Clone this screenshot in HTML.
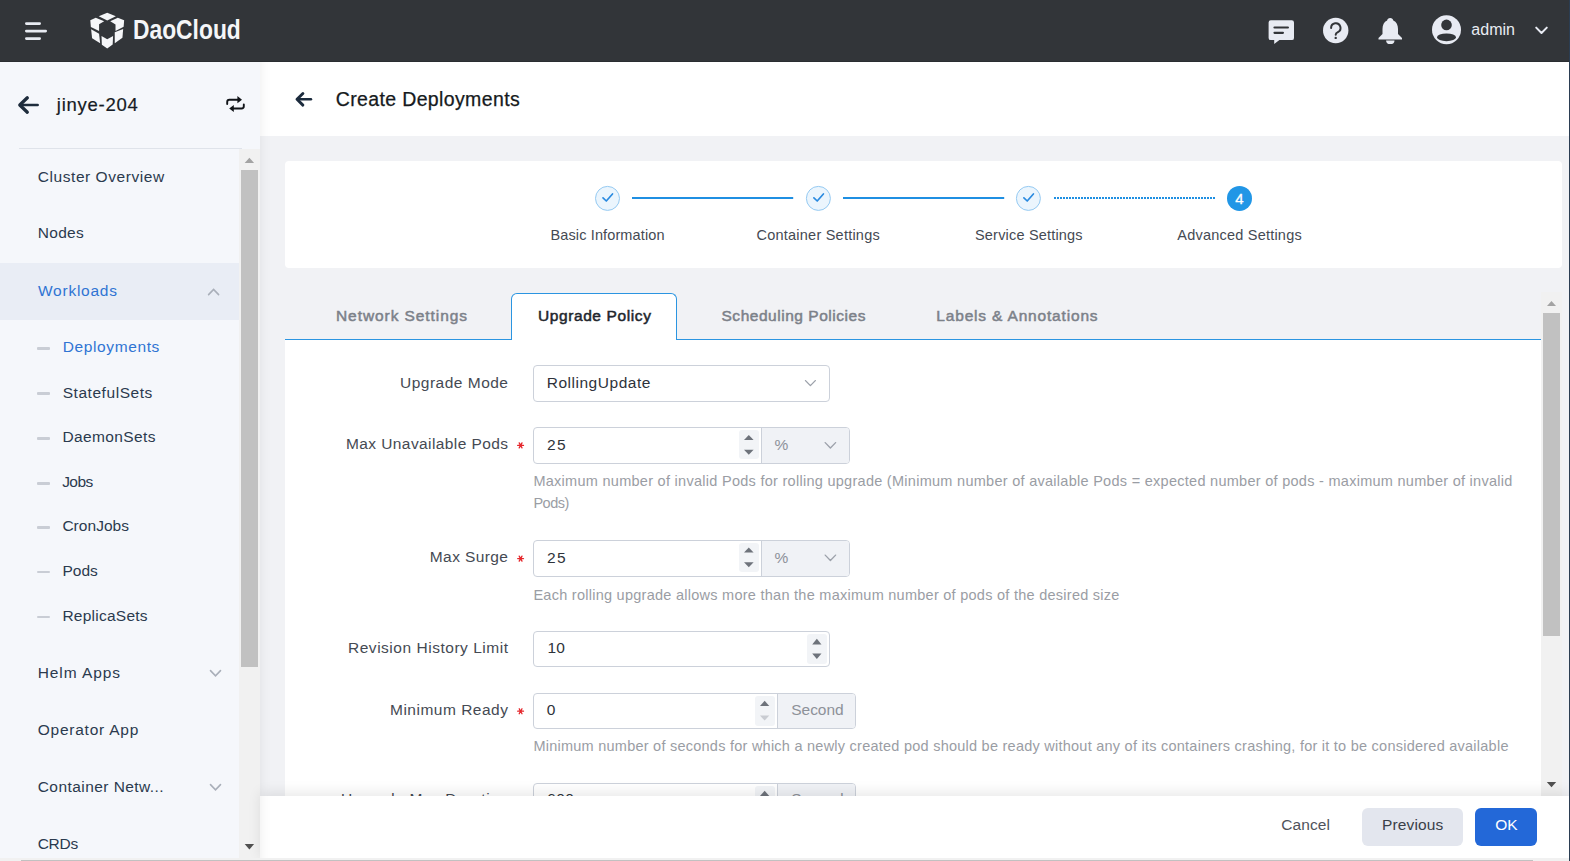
<!DOCTYPE html>
<html><head><meta charset="utf-8">
<style>
*{box-sizing:border-box;margin:0;padding:0}
html,body{width:1570px;height:861px;overflow:hidden;background:#f1f2f5;font-family:"Liberation Sans",sans-serif}
.a{position:absolute}
.t{position:absolute;white-space:nowrap;line-height:normal;z-index:5}
svg{position:absolute;overflow:visible}
.dash{position:absolute;left:37px;width:13px;height:2.5px;background:#c9cdd5;border-radius:1px}
.inp{position:absolute;border:1px solid #ccd1da;border-radius:4px;background:#fff;overflow:hidden}
.add{position:absolute;top:0;bottom:0;right:0;background:#f0f2f6;border-left:1px solid #ccd1da}
.spin{position:absolute;background:#f2f4f7;border-radius:3px}

</style></head><body>
<!-- main gray -->
<div class="a" style="left:260px;top:62px;width:1310px;height:799px;background:#f1f2f5"></div>
<div class="a" style="left:260px;top:62px;width:1310px;height:74px;background:#fff"></div>
<!-- sidebar -->
<div class="a" style="left:0;top:62px;width:260px;height:799px;background:#f5f7fb;z-index:2"></div>
<div class="a" style="left:260px;top:62px;width:24px;height:799px;overflow:hidden;z-index:11"><div class="a" style="left:-300px;top:-20px;width:300px;height:840px;box-shadow:2px 0 10px rgba(0,0,0,0.06)"></div></div>
<div class="a" style="left:0;top:263px;width:239px;height:57px;background:#e9edf5;z-index:3"></div>
<div class="a" style="left:19px;top:148px;width:223px;height:1px;background:#dfe3ea;z-index:3"></div>
<div class="dash" style="top:347px;z-index:3"></div>
<div class="dash" style="top:392px;z-index:3"></div>
<div class="dash" style="top:437px;z-index:3"></div>
<div class="dash" style="top:482px;z-index:3"></div>
<div class="dash" style="top:526px;z-index:3"></div>
<div class="dash" style="top:570.5px;z-index:3"></div>
<div class="dash" style="top:615.5px;z-index:3"></div>
<svg style="left:0;top:0;z-index:4" width="260" height="861">
  <path d="M37.6 105 H21" stroke="#1e2c3c" stroke-width="2.7" fill="none" stroke-linecap="round"/><path d="M27.3 97.8 L19.8 105 L27.3 112.2" stroke="#1e2c3c" stroke-width="3.3" fill="none" stroke-linecap="round" stroke-linejoin="round"/>
  <path d="M227.2 104 V102 A2.2 2.2 0 0 1 229.4 99.8 H238 M243.8 104.4 V106.3 A2.2 2.2 0 0 1 241.6 108.5 H233" stroke="#111418" stroke-width="1.9" fill="none" stroke-linecap="round"/><path d="M237.4 96 L242 99.7 L237.4 103.2Z M233.8 105 L229.2 108.5 L233.8 112Z" fill="#111418"/>
  <path d="M208.6 294.6 L213.6 289.4 L218.6 294.6" stroke="#a9afb9" stroke-width="1.6" fill="none" stroke-linecap="round"/>
  <path d="M210.5 670.6 L215.5 675.8 L220.5 670.6" stroke="#a9afb9" stroke-width="1.6" fill="none" stroke-linecap="round"/>
  <path d="M210.5 784.6 L215.5 789.8 L220.5 784.6" stroke="#a9afb9" stroke-width="1.6" fill="none" stroke-linecap="round"/>
</svg>
<!-- sidebar scrollbar -->
<div class="a" style="left:239px;top:149px;width:21px;height:712px;background:#f1f1f1;z-index:4"></div>
<div class="a" style="left:241px;top:170px;width:17px;height:497px;background:#c1c1c1;z-index:4"></div>
<svg style="left:0;top:0;z-index:4" width="260" height="861">
  <path d="M244.7 163 L249.4 157.8 L254.1 163Z" fill="#a3a3a3"/>
  <path d="M244.7 844 L254.1 844 L249.4 849.4Z" fill="#505050"/>
</svg>
<!-- header -->
<div class="a" style="left:0;top:0;width:1570px;height:62px;background:#323539;border-bottom:1px solid #2a2d31;z-index:6"></div>
<svg style="left:0;top:0;z-index:7" width="1570" height="62">
  <rect x="25" y="22.3" width="16" height="2.6" rx="1.3" fill="#e8ebf2"/>
  <rect x="25" y="29.8" width="22" height="2.6" rx="1.3" fill="#e8ebf2"/>
  <rect x="25" y="37.3" width="16" height="2.6" rx="1.3" fill="#e8ebf2"/>
  <g transform="translate(86,10) scale(0.04878)" fill="#f5f6f8">
    <path d="M262 130 L435 55 L612 130 L435 215Z"/>
    <path d="M88 212 L200 160 L372 232 L268 292 L268 432 L100 348Z"/>
    <path d="M497 232 L652 160 L782 212 L772 345 L605 432 L605 295Z"/>
    <path d="M105 395 L268 485 L290 682 L125 578Z"/>
    <path d="M318 532 L435 602 L555 532 L547 705 L435 790 L325 712Z"/>
    <path d="M590 458 L762 392 L747 570 L590 680Z"/>
  </g>
  <!-- chat -->
  <path d="M2.2 0 H23.2 A2.2 2.2 0 0 1 25.4 2.2 V17.6 A2.2 2.2 0 0 1 23.2 19.8 H10.8 L5.6 23.8 V19.8 H2.2 A2.2 2.2 0 0 1 0 17.6 V2.2 A2.2 2.2 0 0 1 2.2 0Z" transform="translate(1268.6,20.3)" fill="#e8ebf3"/>
  <rect x="1273.4" y="26.4" width="15.6" height="2.2" rx="1.1" fill="#323539"/>
  <rect x="1273.4" y="31.8" width="10.6" height="2.1" rx="1.05" fill="#323539"/>
  <!-- help -->
  <circle cx="1335.7" cy="30.5" r="12.7" fill="#e8ebf3"/>
  <path d="M1331.1 27.9 A4.7 4.7 0 1 1 1337.9 32.1 C1336.3 32.9 1335.7 33.5 1335.7 34.7" stroke="#323539" stroke-width="2" fill="none" stroke-linecap="round"/>
  <circle cx="1335.7" cy="37.9" r="1.2" fill="#323539"/>
  <!-- bell -->
  <path transform="translate(1378.5,18)" d="M11.7 0 C13.5 0 14.5 1.2 14.8 2.5 C18 3.8 19.5 7 19.5 11 V16 L23.5 20 V21.6 H0 V20 L4 16 V11 C4 7 5.5 3.8 8.6 2.5 C8.9 1.2 9.9 0 11.7 0Z M7.6 22.4 H16 A4.2 3.6 0 0 1 7.6 22.4Z" fill="#e8ebf3"/>
  <!-- avatar -->
  <circle cx="1446.5" cy="29.8" r="14.5" fill="#e8ebf3"/>
  <circle cx="1446.5" cy="24.9" r="5.3" fill="#323539"/>
  <ellipse cx="1446.5" cy="37.3" rx="9.5" ry="3.9" fill="#323539"/>
  <path d="M1536.2 27.6 L1541.5 33 L1546.8 27.6" stroke="#e8ebf3" stroke-width="2" fill="none" stroke-linecap="round" stroke-linejoin="round"/>
</svg>
<div class="t" style="left:132.7px;top:14px;font-size:27.5px;font-weight:700;color:#f5f6f8;transform:scaleX(0.83);transform-origin:0 0;z-index:7">DaoCloud</div>
<div class="a" style="left:1569px;top:0;width:1px;height:861px;background:#2b3d52;z-index:20"></div>
<!-- page header back arrow -->
<svg style="left:0;top:0" width="1570" height="861">
  <path d="M311 99.3 H298.5" stroke="#1c2b3d" stroke-width="2.4" fill="none" stroke-linecap="round"/><path d="M302.9 93.5 L297 99.3 L302.9 105.1" stroke="#1c2b3d" stroke-width="2.9" fill="none" stroke-linecap="round" stroke-linejoin="round"/>
</svg>
<!-- steps card -->
<div class="a" style="left:285px;top:161px;width:1277px;height:107px;background:#fff;border-radius:4px"></div>
<svg style="left:0;top:0;z-index:3" width="1570" height="861">
  <rect x="632" y="197" width="161.2" height="2" fill="#1f8fe2"/>
  <rect x="843" y="197" width="161.2" height="2" fill="#1f8fe2"/>
  <line x1="1054" y1="198" x2="1215" y2="198" stroke="#1f8fe2" stroke-width="2" stroke-dasharray="2 1"/>
  <g fill="#ebf5fd" stroke="#95caf2" stroke-width="1">
    <circle cx="607.5" cy="198.4" r="12"/>
    <circle cx="818.4" cy="198.4" r="12"/>
    <circle cx="1028.4" cy="198.4" r="12"/>
  </g>
  <g stroke="#2a8ae0" stroke-width="1.7" fill="none" stroke-linecap="round" stroke-linejoin="round">
    <path d="M603 197.9 L606.3 201 L612.5 194"/>
    <path d="M813.9 197.9 L817.2 201 L823.4 194"/>
    <path d="M1023.9 197.9 L1027.2 201 L1033.4 194"/>
  </g>
  <circle cx="1239.5" cy="198.4" r="12.5" fill="#2196e6"/>
</svg>
<!-- tabs -->
<div class="a" style="left:285px;top:339px;width:1256px;height:1px;background:#2b95e1"></div>
<div class="a" style="left:511px;top:293px;width:166px;height:47px;background:#fff;border:1px solid #2b95e1;border-bottom:none;border-radius:6px 6px 0 0;z-index:2"></div>
<!-- form area -->
<div class="a" style="left:285px;top:340px;width:1256px;height:456px;background:#fff"></div>
<!-- right scrollbar -->
<div class="a" style="left:1541px;top:292px;width:21px;height:504px;background:#f1f1f1"></div>
<div class="a" style="left:1543px;top:313px;width:17px;height:323px;background:#c1c1c1"></div>
<svg style="left:0;top:0;z-index:3" width="1570" height="861">
  <path d="M1547 306 L1551.5 301 L1556 306Z" fill="#a3a3a3"/>
  <path d="M1546.8 782 L1556.2 782 L1551.5 787.2Z" fill="#505050"/>
</svg>
<!-- inputs -->
<div class="inp" style="left:533px;top:365px;width:297px;height:37px"></div>
<div class="inp" style="left:533px;top:427px;width:317px;height:37px"><div class="add" style="width:88px"></div><div class="spin" style="left:205px;top:2px;width:19.7px;height:29.3px"></div></div>
<div class="inp" style="left:533px;top:539.5px;width:317px;height:37px"><div class="add" style="width:88px"></div><div class="spin" style="left:205px;top:2px;width:19.7px;height:29.3px"></div></div>
<div class="inp" style="left:533px;top:630.5px;width:297px;height:36px"><div class="spin" style="left:273px;top:2.5px;width:19.5px;height:29.5px"></div></div>
<div class="inp" style="left:533px;top:692.5px;width:322.5px;height:36px"><div class="add" style="width:77.5px"></div><div class="spin" style="left:221px;top:2.5px;width:19.6px;height:29.5px"></div></div>
<div class="inp" style="left:533px;top:782.5px;width:322.5px;height:36px"><div class="add" style="width:77.5px"></div><div class="spin" style="left:221px;top:2.5px;width:19.6px;height:29.5px"></div></div>
<svg style="left:0;top:0;z-index:3" width="1570" height="861">
  <g stroke="#9ca1aa" stroke-width="1.35" fill="none" stroke-linecap="round" stroke-linejoin="round">
    <path d="M805.5 380.6 L810.4 385.6 L815.3 380.6"/>
    <path d="M825.2 442.6 L830.4 448 L835.6 442.6"/>
    <path d="M825.2 555.1 L830.4 560.5 L835.6 555.1"/>
  </g>
  <g fill="#6e737b">
    <path d="M744 439.9 L748.8 434.9 L753.6 439.9Z"/>
    <path d="M744 449.8 L753.6 449.8 L748.8 454.8Z"/>
    <path d="M744 552.4 L748.8 547.4 L753.6 552.4Z"/>
    <path d="M744 562.3 L753.6 562.3 L748.8 567.3Z"/>
    <path d="M812.2 644.4 L816.85 638.8 L821.5 644.4Z"/>
    <path d="M812.2 653.4 L821.5 653.4 L816.85 659Z"/>
    <path d="M760 706 L764.65 700.8 L769.3 706Z"/>
    <path d="M760 796 L764.65 790.8 L769.3 796Z"/>
  </g>
  <path d="M760 715.5 L769.3 715.5 L764.65 720.6Z" fill="#c9ccd2"/>
  <g stroke="#e5262b" stroke-width="1.3" stroke-linecap="round">
    <path d="M517.7 445.4 H523.5 M519.2 442.9 L522 447.9 M522 442.9 L519.2 447.9"/>
    <path d="M517.7 558.6 H523.5 M519.2 556.1 L522 561.1 M522 556.1 L519.2 561.1"/>
    <path d="M517.7 711.2 H523.5 M519.2 708.7 L522 713.7 M522 708.7 L519.2 713.7"/>
  </g>
</svg>
<!-- footer -->
<div class="a" style="left:260px;top:796px;width:1310px;height:65px;background:#fff;box-shadow:0 -4px 12px rgba(0,0,0,0.085);z-index:10"></div>
<div class="a" style="left:1362px;top:808px;width:101px;height:38px;background:#e3e6ee;border-radius:6px;z-index:11"></div>
<div class="a" style="left:1475px;top:808px;width:62px;height:38px;background:#2368d8;border-radius:6px;z-index:11"></div>
<!-- bottom h scrollbar -->
<div class="a" style="left:0;top:858px;width:1569px;height:3px;background:#f1f1f1;z-index:12"></div>
<div class="a" style="left:21px;top:859.5px;width:1512px;height:2px;background:#c1c1c1;z-index:12"></div>

<div class="t" style="left:1471.30px;top:20.72px;font-size:16px;color:#e9ecf3;letter-spacing:0.030px;z-index:8;">admin</div>
<div class="t" style="left:56.80px;top:94.46px;font-size:18.5px;color:#151b24;letter-spacing:0.740px;-webkit-text-stroke:0.2px #151b24;">jinye-204</div>
<div class="t" style="left:37.80px;top:167.67px;font-size:15.5px;color:#2b3a4e;letter-spacing:0.553px;">Cluster Overview</div>
<div class="t" style="left:37.80px;top:224.47px;font-size:15.5px;color:#2b3a4e;letter-spacing:0.297px;">Nodes</div>
<div class="t" style="left:38.00px;top:281.67px;font-size:15.5px;color:#2f74d3;letter-spacing:0.758px;">Workloads</div>
<div class="t" style="left:62.70px;top:338.37px;font-size:15.5px;color:#2f74d3;letter-spacing:0.623px;">Deployments</div>
<div class="t" style="left:62.70px;top:383.87px;font-size:15.5px;color:#2b3a4e;letter-spacing:0.547px;">StatefulSets</div>
<div class="t" style="left:62.50px;top:428.47px;font-size:15.5px;color:#2b3a4e;letter-spacing:0.377px;">DaemonSets</div>
<div class="t" style="left:62.20px;top:473.47px;font-size:15.5px;color:#2b3a4e;letter-spacing:-0.583px;">Jobs</div>
<div class="t" style="left:62.40px;top:517.47px;font-size:15.5px;color:#2b3a4e;letter-spacing:0.037px;">CronJobs</div>
<div class="t" style="left:62.40px;top:562.07px;font-size:15.5px;color:#2b3a4e;letter-spacing:0.019px;">Pods</div>
<div class="t" style="left:62.40px;top:607.07px;font-size:15.5px;color:#2b3a4e;letter-spacing:0.248px;">ReplicaSets</div>
<div class="t" style="left:37.70px;top:664.47px;font-size:15.5px;color:#2b3a4e;letter-spacing:0.918px;">Helm Apps</div>
<div class="t" style="left:37.70px;top:721.17px;font-size:15.5px;color:#2b3a4e;letter-spacing:0.763px;">Operator App</div>
<div class="t" style="left:37.70px;top:778.07px;font-size:15.5px;color:#2b3a4e;letter-spacing:0.443px;">Container Netw...</div>
<div class="t" style="left:37.70px;top:834.87px;font-size:15.5px;color:#2b3a4e;letter-spacing:-0.281px;">CRDs</div>
<div class="t" style="left:335.70px;top:88.15px;font-size:19.5px;color:#161a20;letter-spacing:0.368px;-webkit-text-stroke:0.25px #161a20;">Create Deployments</div>
<div class="t" style="left:550.50px;top:226.88px;font-size:14.5px;color:#454a53;letter-spacing:0.123px;">Basic Information</div>
<div class="t" style="left:756.50px;top:226.88px;font-size:14.5px;color:#454a53;letter-spacing:0.230px;">Container Settings</div>
<div class="t" style="left:975.00px;top:226.88px;font-size:14.5px;color:#454a53;letter-spacing:0.188px;">Service Settings</div>
<div class="t" style="left:1177.30px;top:226.88px;font-size:14.5px;color:#454a53;letter-spacing:0.217px;">Advanced Settings</div>
<div class="t" style="left:336.00px;top:306.67px;font-size:15.5px;color:#7c8189;letter-spacing:0.922px;-webkit-text-stroke:0.5px #7c8189;">Network Settings</div>
<div class="t" style="left:537.90px;top:306.67px;font-size:15.5px;color:#22262d;letter-spacing:0.607px;-webkit-text-stroke:0.5px #22262d;">Upgrade Policy</div>
<div class="t" style="left:721.50px;top:306.67px;font-size:15.5px;color:#7c8189;letter-spacing:0.527px;-webkit-text-stroke:0.5px #7c8189;">Scheduling Policies</div>
<div class="t" style="left:936.30px;top:306.67px;font-size:15.5px;color:#7c8189;letter-spacing:0.824px;-webkit-text-stroke:0.5px #7c8189;">Labels &amp; Annotations</div>
<div class="t" style="left:400.00px;top:373.57px;font-size:15.5px;color:#454a53;letter-spacing:0.496px;">Upgrade Mode</div>
<div class="t" style="left:346.00px;top:435.07px;font-size:15.5px;color:#454a53;letter-spacing:0.409px;">Max Unavailable Pods</div>
<div class="t" style="left:429.80px;top:548.27px;font-size:15.5px;color:#454a53;letter-spacing:0.406px;">Max Surge</div>
<div class="t" style="left:348.00px;top:638.97px;font-size:15.5px;color:#454a53;letter-spacing:0.523px;">Revision History Limit</div>
<div class="t" style="left:390.00px;top:700.87px;font-size:15.5px;color:#454a53;letter-spacing:0.501px;">Minimum Ready</div>
<div class="t" style="left:341.00px;top:789.77px;font-size:15.5px;color:#454a53;letter-spacing:0.581px;">Upgrade Max Duration</div>
<div class="t" style="left:546.70px;top:373.87px;font-size:15.5px;color:#2e333b;letter-spacing:0.527px;">RollingUpdate</div>
<div class="t" style="left:547.00px;top:435.87px;font-size:15.5px;color:#2e333b;letter-spacing:1.450px;">25</div>
<div class="t" style="left:774.60px;top:435.87px;font-size:15.5px;color:#8d9199;">%</div>
<div class="t" style="left:547.00px;top:548.67px;font-size:15.5px;color:#2e333b;letter-spacing:1.450px;">25</div>
<div class="t" style="left:774.60px;top:548.67px;font-size:15.5px;color:#8d9199;">%</div>
<div class="t" style="left:547.50px;top:638.97px;font-size:15.5px;color:#2e333b;letter-spacing:0.250px;">10</div>
<div class="t" style="left:546.70px;top:700.87px;font-size:15.5px;color:#2e333b;">0</div>
<div class="t" style="left:791.30px;top:700.87px;font-size:15.5px;color:#8d9199;letter-spacing:-0.056px;">Second</div>
<div class="t" style="left:547.00px;top:789.77px;font-size:15.5px;color:#2e333b;letter-spacing:0.562px;">600</div>
<div class="t" style="left:791.30px;top:789.77px;font-size:15.5px;color:#8d9199;letter-spacing:-0.056px;">Second</div>
<div class="t" style="left:533.40px;top:473.08px;font-size:14.5px;color:#9a9da4;letter-spacing:0.278px;">Maximum number of invalid Pods for rolling upgrade (Minimum number of available Pods = expected number of pods - maximum number of invalid</div>
<div class="t" style="left:533.40px;top:494.98px;font-size:14.5px;color:#9a9da4;letter-spacing:-0.473px;">Pods)</div>
<div class="t" style="left:533.40px;top:586.68px;font-size:14.5px;color:#9a9da4;letter-spacing:0.263px;">Each rolling upgrade allows more than the maximum number of pods of the desired size</div>
<div class="t" style="left:533.40px;top:737.88px;font-size:14.5px;color:#9a9da4;letter-spacing:0.245px;">Minimum number of seconds for which a newly created pod should be ready without any of its containers crashing, for it to be considered available</div>
<div class="t" style="left:1281.30px;top:816.47px;font-size:15.5px;color:#4f535b;letter-spacing:0.090px;z-index:12;">Cancel</div>
<div class="t" style="left:1382.00px;top:816.47px;font-size:15.5px;color:#3a3f48;letter-spacing:0.127px;z-index:12;">Previous</div>
<div class="t" style="left:1495.30px;top:816.47px;font-size:15.5px;color:#ffffff;letter-spacing:-0.006px;z-index:12;">OK</div>
<div class="t" style="left:1235.33px;top:189.83px;font-size:15px;color:#ffffff;-webkit-text-stroke:0.3px #fff;">4</div>
</body></html>
